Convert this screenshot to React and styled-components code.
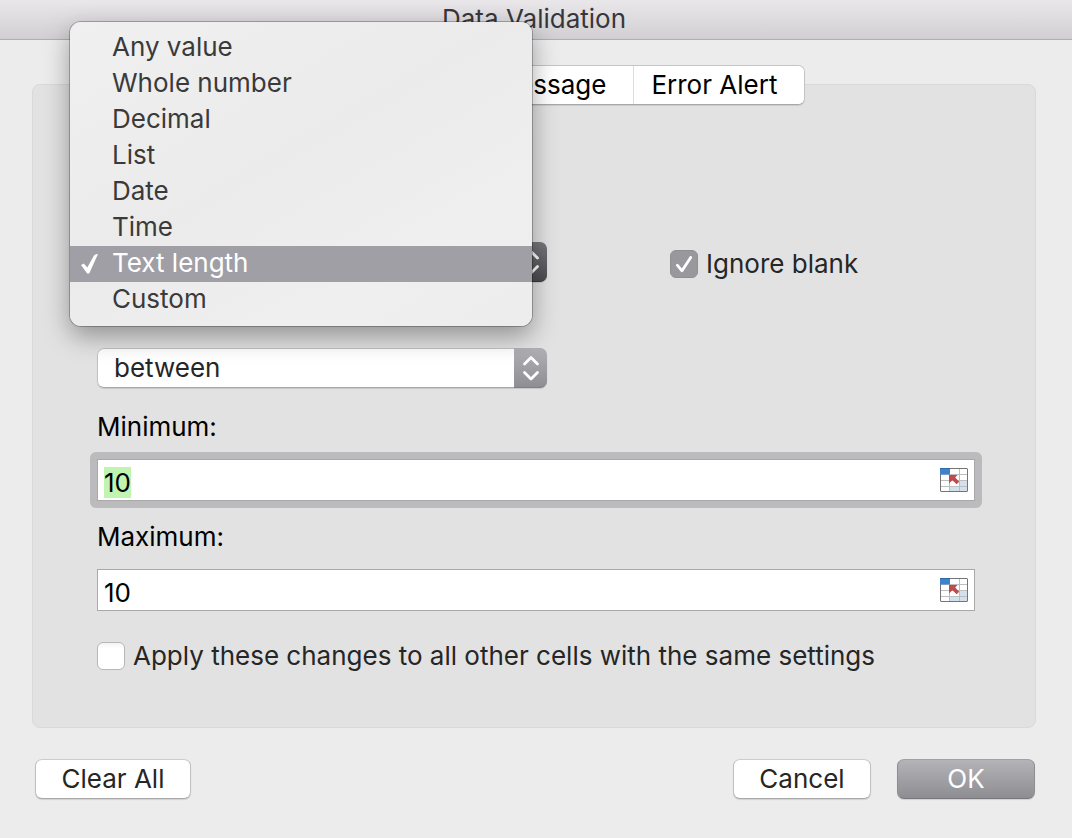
import React, { useEffect, useRef } from "react";
import styled, { createGlobalStyle } from "styled-components";

const GlobalStyle = createGlobalStyle`
  *, *::before, *::after {
    box-sizing: border-box;
  }

  body {
    margin: 0;
    background: #ececec;
    color: #262626;
    font-family: Inter, "Liberation Sans", sans-serif;
    font-size: 26px;
    line-height: 32px;
  }

  button, input, select {
    font: inherit;
    color: inherit;
    margin: 0;
  }
`;

const Dialog = styled.main`
  display: flex;
  flex-direction: column;
`;

const TitleBar = styled.header`
  height: 40px;
  padding: 3px 36px 0 32px;
  background: linear-gradient(#e9e7ea, #d1cfd2);
  border-bottom: 1px solid #b0aeb0;
  text-align: center;
`;

const Title = styled.h1`
  margin: 0;
  color: #38363a;
  font-size: 26px;
  font-weight: 400;
`;

const Content = styled.div`
  padding: 25px 36px 32px 32px;
`;

const Tabs = styled.div`
  position: relative;
  display: flex;
  width: fit-content;
  margin: 0 auto;
  background: #ffffff;
  border: 1px solid #c4c4c4;
  border-bottom-color: #a8a8a8;
  border-radius: 7px;
  box-shadow: 0 1px 1px rgba(0, 0, 0, 0.1);
  overflow: hidden;
`;

const Tab = styled.button`
  height: 38px;
  padding: 0 27px 0 17px;
  border: 0;
  border-left: ${(props) => (props.$first ? "0" : "1px solid #dcdcdc")};
  background: ${(props) => (props.$active ? "#8f8e93" : "#ffffff")};
  color: ${(props) => (props.$active ? "#ffffff" : "#000000")};
`;

const Panel = styled.section`
  display: flex;
  flex-direction: column;
  margin-top: -21px;
  padding: 157px 60px 55px 64px;
  background: #e2e2e2;
  border: 1px solid #d9d9d9;
  border-radius: 8px;
`;

const Criteria = styled.div`
  display: grid;
  grid-template-columns: minmax(0, 450px) auto;
  justify-content: start;
  gap: 66px 123px;
  margin-bottom: 23px;
`;

const Range = styled.div`
  display: grid;
  gap: 20px;
  margin-bottom: 29px;
`;

const Field = styled.div`
  display: flex;
  flex-direction: column;
  gap: 16px;
`;

const Label = styled.label`
  color: #000000;
`;

const SelectBox = styled.div`
  position: relative;
  display: grid;
  grid-template-columns: 1fr 33px;
  height: 40px;
  border-radius: 7px;
  background: #ffffff;
  box-shadow: 0 1px 1px rgba(0, 0, 0, 0.12);

  & select {
    grid-column: 1 / 3;
    grid-row: 1;
    width: 100%;
    height: 40px;
    padding: 0 40px 0 16px;
    appearance: none;
    background: transparent;
    border: 1px solid #c2c2c2;
    border-bottom-color: #a6a6a6;
    border-radius: 7px;
    outline: none;
  }
`;

const Stepper = styled.span`
  grid-column: 2;
  grid-row: 1;
  display: grid;
  place-items: center;
  border-radius: 0 7px 7px 0;
  border-bottom: 1px solid ${(props) => (props.$pressed ? "#3a3a3e" : "#807f84")};
  background: ${(props) =>
    props.$pressed ? "linear-gradient(#78777c, #4c4b50)" : "linear-gradient(#b1b0b5, #8f8e93)"};
  pointer-events: none;
`;

const Menu = styled.ul`
  position: absolute;
  z-index: 2;
  top: -220px;
  left: -27px;
  right: 15px;
  margin: 0;
  padding: 8px 0;
  list-style: none;
  background: linear-gradient(150deg, #f0f0f0, #ebebeb 45%, #efefef 75%, #ededed);
  border-radius: 11px;
  box-shadow: 0 0 0 1px rgba(0, 0, 0, 0.25), 0 10px 26px rgba(0, 0, 0, 0.36);
`;

const MenuItem = styled.li`
  display: grid;
  grid-template-columns: 32px 1fr;
  align-items: center;
  height: 36px;
  padding: 0 10px;
  background: ${(props) => (props.$selected ? "#a09fa5" : "transparent")};
  color: ${(props) => (props.$selected ? "#ffffff" : "#3a3a3a")};

  & span {
    grid-column: 2;
    padding-bottom: 2px;
  }

  & svg {
    grid-row: 1;
  }
`;

const CheckLabel = styled.label`
  display: flex;
  align-items: center;
  gap: 8px;
`;

const IgnoreLabel = styled(CheckLabel)`
  height: 40px;
  padding-top: 4px;
`;

const CheckBox = styled.span`
  display: grid;
  flex: none;
  width: 28px;
  height: 28px;

  & > * {
    grid-area: 1 / 1;
  }

  & svg {
    pointer-events: none;
  }

  & input {
    width: 28px;
    height: 28px;
    appearance: none;
    background: linear-gradient(#f4f4f4, #ffffff 20%);
    border: 1px solid #b7b7b7;
    border-radius: 6px;
  }

  & input:checked {
    background: #99989d;
    border-color: #8f8e93;
  }
`;

const FocusRing = styled.div`
  margin: -7px;
  padding: 7px;
  border-radius: 6px;
  background: ${(props) => (props.$focused ? "#bbbbbd" : "transparent")};
`;

const InputBox = styled.div`
  display: flex;
  align-items: center;
  height: 42px;
  padding: 0 6px;
  background: #ffffff;
  border: 1px solid #a9a9a9;

  & input {
    flex: 1;
    min-width: 0;
    height: 40px;
    padding: 4px 0 0;
    border: 0;
    outline: none;
    background: transparent;
    color: #000000;
    line-height: 34px;
  }

  & input::selection {
    background: #c1f4b0;
    color: #000000;
  }
`;

const PickButton = styled.button`
  display: flex;
  padding: 0;
  border: 0;
  background: none;
`;

const Footer = styled.footer`
  display: flex;
  gap: 26px;
  margin: 31px 1px 0 3px;
`;

const Button = styled.button`
  height: 40px;
  min-width: ${(props) => (props.$wide ? "156px" : "138px")};
  margin-right: ${(props) => (props.$wide ? "auto" : "0")};
  padding: 0 16px;
  border: 1px solid;
  border-color: ${(props) => (props.$primary ? "#a09fa4 #8e8d92 #78777b" : "#cccccc #c0c0c0 #a9a9a9")};
  border-radius: 7px;
  background: ${(props) => (props.$primary ? "linear-gradient(#b4b3b8, #8e8d92)" : "#ffffff")};
  box-shadow: 0 1px 1px rgba(0, 0, 0, 0.12);
  color: ${(props) => (props.$primary ? "#ffffff" : "#262626")};
`;

const OPTIONS = ["Any value", "Whole number", "Decimal", "List", "Date", "Time", "Text length", "Custom"];

const Arrows = () => (
  <svg width="18" height="26" viewBox="0 0 18 26" fill="none" stroke="#ffffff" strokeWidth="2.8" strokeLinecap="round" strokeLinejoin="round">
    <path d="M2.500 9 9 2.500 15.500 9M2.500 17.500 9 24l6.500-6.500" />
  </svg>
);

const MenuCheck = () => (
  <svg width="19" height="22" viewBox="0 0 19 22" fill="#ffffff">
    <path d="M1 12 3.800 10.500 7.300 14.500 14 2.500Q15.200 .8 18 1L9.200 20.500H7.200Z" />
  </svg>
);

const BoxCheck = () => (
  <svg width="28" height="28" viewBox="0 0 28 28" fill="none" stroke="#ffffff" strokeWidth="2.800" strokeLinecap="round" strokeLinejoin="round">
    <path d="M7.300 15.200 12 20.800 20.700 7.400" />
  </svg>
);

const RangeIcon = () => (
  <svg width="28" height="26" viewBox="0 0 28 26">
    <rect x="0.500" y="1.500" width="27" height="23" rx="0.500" fill="#ffffff" />
    <path d="M19 13h8.500v11.500H9.500v-5.500H19Z" fill="#d3e0ed" />
    <path d="M9.500 1.500v23M19.500 1.500v23M.5 7.500h27M.5 13.500h27M.5 19.500h27" stroke="#bdbdbd" fill="none" />
    <rect x="0.500" y="1.500" width="27" height="23" rx="0.500" fill="none" stroke="#747478" />
    <rect x="0" y="1" width="10" height="6.500" fill="#3f84c8" />
    <path d="M0 1.500h10" stroke="#2d69a8" />
    <path d="M9 8h8.500l-2.300 2.500 4 4.300-2.600 2.500-4.200-4L9 16.500Z" fill="#c4494b" />
  </svg>
);

const RangeField = ({ id, label, focused, inputRef }) => (
  <Field>
    <Label htmlFor={id}>{label}</Label>
    <FocusRing $focused={focused}>
      <InputBox>
        <input id={id} type="text" defaultValue="10" ref={inputRef} />
        <PickButton type="button" aria-label={`Select cell for ${label}`}>
          <RangeIcon />
        </PickButton>
      </InputBox>
    </FocusRing>
  </Field>
);

export default function App() {
  const minimumRef = useRef(null);

  useEffect(() => {
    minimumRef.current.focus();
    minimumRef.current.select();
  }, []);

  return (
    <Dialog>
      <GlobalStyle />
      <TitleBar>
        <Title>Data Validation</Title>
      </TitleBar>
      <Content>
        <Tabs>
          <Tab type="button" $first $active>Settings</Tab>
          <Tab type="button">Input Message</Tab>
          <Tab type="button">Error Alert</Tab>
        </Tabs>
        <Panel>
          <Criteria>
            <SelectBox>
              <select aria-label="Allow" defaultValue="Text length">
                {OPTIONS.map((option) => (
                  <option key={option}>{option}</option>
                ))}
              </select>
              <Stepper $pressed>
                <Arrows />
              </Stepper>
              <Menu role="listbox" aria-label="Allow">
                {OPTIONS.map((option) => (
                  <MenuItem
                    key={option}
                    role="option"
                    aria-selected={option === "Text length"}
                    $selected={option === "Text length"}
                  >
                    {option === "Text length" && <MenuCheck />}
                    <span>{option}</span>
                  </MenuItem>
                ))}
              </Menu>
            </SelectBox>
            <IgnoreLabel>
              <CheckBox>
                <input type="checkbox" defaultChecked />
                <BoxCheck />
              </CheckBox>
              Ignore blank
            </IgnoreLabel>
            <SelectBox>
              <select aria-label="Data" defaultValue="between">
                <option>between</option>
                <option>not between</option>
              </select>
              <Stepper>
                <Arrows />
              </Stepper>
            </SelectBox>
          </Criteria>
          <Range>
            <RangeField id="minimum" label="Minimum:" focused inputRef={minimumRef} />
            <RangeField id="maximum" label="Maximum:" />
          </Range>
          <CheckLabel>
            <CheckBox>
              <input type="checkbox" />
            </CheckBox>
            Apply these changes to all other cells with the same settings
          </CheckLabel>
        </Panel>
        <Footer>
          <Button type="button" $wide>Clear All</Button>
          <Button type="button">Cancel</Button>
          <Button type="button" $primary>OK</Button>
        </Footer>
      </Content>
    </Dialog>
  );
}
